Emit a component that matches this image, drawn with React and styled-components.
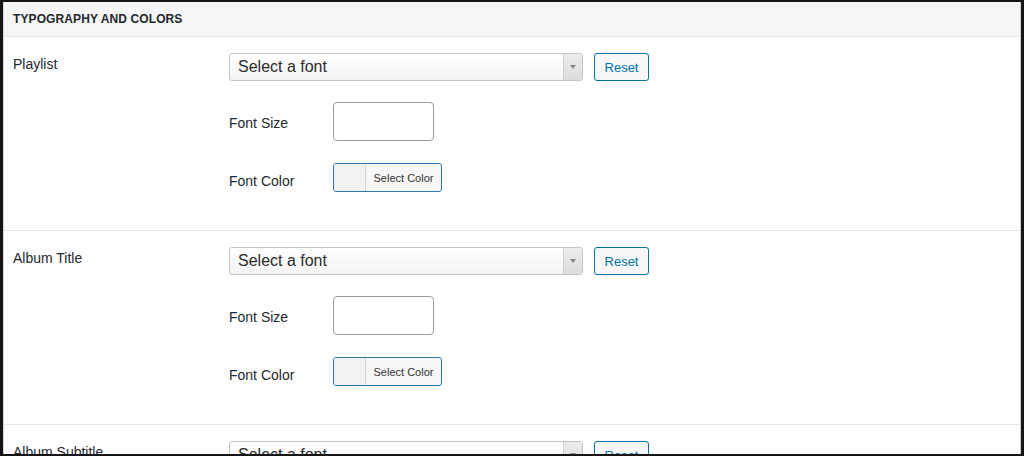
import React from "react";
import styled, { createGlobalStyle } from "styled-components";

const GlobalStyle = createGlobalStyle`
  html, body {
    margin: 0;
    padding: 0;
    background: #fff;
  }
  body {
    font-family: "Liberation Sans", Arial, sans-serif;
    color: #23282d;
  }
`;

const Frame = styled.div`
  box-sizing: border-box;
  width: 1024px;
  height: 456px;
  border-style: solid;
  border-color: #151515;
  border-width: 2px 3px 2px 3px;
  overflow: hidden;
`;

const Panel = styled.div`
  box-sizing: border-box;
  min-height: 100%;
  border-left: 1px solid #d6d6d6;
  border-right: 1px solid #cfcfcf;
  background: #fff;
`;

const Header = styled.div`
  height: 34px;
  display: flex;
  align-items: center;
  padding-left: 9px;
  background: #f6f6f6;
  border-bottom: 1px solid #e3e5e8;
  font-size: 12px;
  font-weight: 700;
  color: #23282d;
  letter-spacing: 0.1px;
`;

const Section = styled.div`
  display: grid;
  grid-template-columns: 216px 1fr;
  padding: 16px 0 38px 9px;
  border-bottom: 1px solid #e5e5e5;
`;

const Label = styled.div`
  font-size: 14px;
  line-height: 20px;
  padding-top: 1px;
  color: #23282d;
`;

const Controls = styled.div`
  display: flex;
  flex-direction: column;
`;

const FontRow = styled.div`
  display: flex;
  align-items: center;
  gap: 11px;
`;

const SelectBox = styled.div`
  box-sizing: border-box;
  position: relative;
  width: 354px;
  height: 28px;
  border: 1px solid #c4c4c4;
  border-radius: 3px;
  background: linear-gradient(#ffffff, #f4f4f4);
  display: flex;
  align-items: center;
  padding-left: 8px;
  font-size: 16px;
  color: #2a2a2a;
`;

const Arrow = styled.div`
  position: absolute;
  top: 0;
  right: 0;
  bottom: 0;
  width: 18px;
  border-left: 1px solid #d0d0d0;
  border-radius: 0 2px 2px 0;
  background: linear-gradient(#ececec, #dcdcdc);
  display: flex;
  align-items: center;
  justify-content: center;

  &::after {
    content: "";
    border-left: 3px solid transparent;
    border-right: 3px solid transparent;
    border-top: 4px solid #888;
  }
`;

const ResetButton = styled.button`
  box-sizing: border-box;
  width: 55px;
  height: 28px;
  border: 1px solid #0073aa;
  border-radius: 3px;
  background: #f7f7f7;
  color: #0073aa;
  font-family: inherit;
  font-size: 13px;
  padding: 0;
  cursor: pointer;
`;

const SubRow = styled.div`
  display: flex;
  align-items: center;
  margin-top: ${p => p.gap}px;
`;

const SubLabel = styled.div`
  width: 104px;
  font-size: 14px;
  line-height: 20px;
  padding-top: ${p => p.offset || 0}px;
  color: #23282d;
`;

const SizeInput = styled.div`
  box-sizing: border-box;
  width: 101px;
  height: 39px;
  border: 1px solid #9a9a9a;
  border-radius: 4px;
  background: #fff;
`;

const ColorButton = styled.div`
  box-sizing: border-box;
  display: flex;
  width: 109px;
  height: 29px;
  border: 1px solid #2b78b0;
  border-radius: 3px;
  overflow: hidden;
  background: #f7f7f7;
`;

const Swatch = styled.div`
  width: 31px;
  background: #f2f2f2;
  border-right: 1px solid #d3d3d3;
`;

const ColorText = styled.div`
  flex: 1;
  display: flex;
  align-items: center;
  justify-content: center;
  font-size: 11px;
  color: #333;
`;

const sections = ["Playlist", "Album Title", "Album Subtitle"];

const FontSettings = ({ title }) => (
  <Section>
    <Label>{title}</Label>
    <Controls>
      <FontRow>
        <SelectBox>
          Select a font
          <Arrow />
        </SelectBox>
        <ResetButton>Reset</ResetButton>
      </FontRow>
      <SubRow gap={21}>
        <SubLabel offset={3}>Font Size</SubLabel>
        <SizeInput />
      </SubRow>
      <SubRow gap={22}>
        <SubLabel offset={6}>Font Color</SubLabel>
        <ColorButton>
          <Swatch />
          <ColorText>Select Color</ColorText>
        </ColorButton>
      </SubRow>
    </Controls>
  </Section>
);

export default function App() {
  return (
    <>
      <GlobalStyle />
      <Frame>
        <Panel>
          <Header>TYPOGRAPHY AND COLORS</Header>
          {sections.map(title => (
            <FontSettings key={title} title={title} />
          ))}
        </Panel>
      </Frame>
    </>
  );
}
